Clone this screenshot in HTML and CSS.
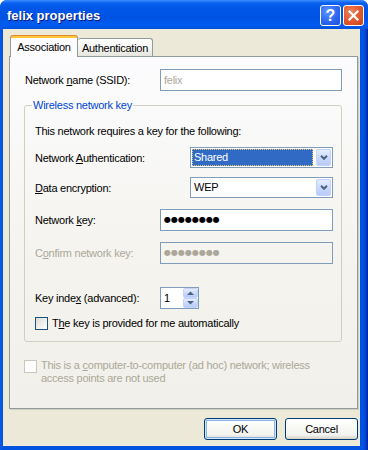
FILE: index.html
```html
<!DOCTYPE html>
<html>
<head>
<meta charset="utf-8">
<link rel="stylesheet" href="styles.css">
</head>
<body>
<div class="window">
  <div class="titlebar">
    <span class="title">felix properties</span>
    <span class="tbtn help">?</span>
    <span class="tbtn close"><svg width="13" height="13" viewBox="0 0 13 13"><path d="M2.5 2.5L10.5 10.5M10.5 2.5L2.5 10.5" stroke="#fff" stroke-width="2.2" stroke-linecap="square"/></svg></span>
  </div>
  <div class="client">
    <div class="tabs">
      <div class="tab active">Association</div>
      <div class="tab">Authentication</div>
    </div>
    <div class="panel">
      <div class="row ssid">
        <span class="lbl">Network <u>n</u>ame (SSID):</span>
        <div class="edit"><span class="ro">felix</span></div>
      </div>
      <fieldset class="group">
        <legend>Wireless network key</legend>
        <div class="intro">This network requires a key for the following:</div>
        <div class="row combo-row">
          <span class="lbl">Network <u>A</u>uthentication:</span>
          <div class="combo"><span class="val sel">Shared</span><span class="drop"><svg width="8" height="5" viewBox="0 0 8 5"><path d="M1 0.8L4 3.8L7 0.8" fill="none" stroke="#4D6185" stroke-width="2"/></svg></span></div>
        </div>
        <div class="row combo-row second">
          <span class="lbl"><u>D</u>ata encryption:</span>
          <div class="combo"><span class="val">WEP</span><span class="drop"><svg width="8" height="5" viewBox="0 0 8 5"><path d="M1 0.8L4 3.8L7 0.8" fill="none" stroke="#4D6185" stroke-width="2"/></svg></span></div>
        </div>
        <div class="row key-row">
          <span class="lbl">Network <u>k</u>ey:</span>
          <div class="edit"><span class="dots">●●●●●●●●</span></div>
        </div>
        <div class="row key-row">
          <span class="lbl dis">C<u>o</u>nfirm network key:</span>
          <div class="edit disabled"><span class="dots">●●●●●●●●</span></div>
        </div>
        <div class="row idx-row">
          <span class="lbl">Key inde<u>x</u> (advanced):</span>
          <div class="spin">
            <span class="spin-val">1</span>
            <span class="spin-btns">
              <span class="sbtn"><svg width="7" height="4" viewBox="0 0 7 4"><path d="M0 4L3.5 0.5L7 4Z" fill="#4D6185"/></svg></span>
              <span class="sbtn"><svg width="7" height="4" viewBox="0 0 7 4"><path d="M0 0L3.5 3.5L7 0Z" fill="#4D6185"/></svg></span>
            </span>
          </div>
        </div>
        <div class="check-row">
          <span class="cbox"></span>
          <span>T<u>h</u>e key is provided for me automatically</span>
        </div>
      </fieldset>
      <div class="adhoc">
        <span class="cbox disabled"></span>
        <span class="dis">This is a <u>c</u>omputer-to-computer (ad hoc) network; wireless<br>access points are not used</span>
      </div>
    </div>
    <div class="buttons">
      <div class="btn default">OK</div>
      <div class="btn">Cancel</div>
    </div>
  </div>
</div>
</body>
</html>
```

FILE: styles.css
```css
html, body {
  margin: 0;
  padding: 0;
}
body {
  width: 368px;
  height: 450px;
  overflow: hidden;
  background: #ffffff;
  font-family: "Liberation Sans", Arial, sans-serif;
  font-size: 11px;
  letter-spacing: -0.25px;
  color: #000;
}
.window {
  width: 368px;
  height: 450px;
  box-sizing: border-box;
  display: flex;
  flex-direction: column;
  background: linear-gradient(to right, #0A5AE6 0, #0053E1 3px, #0053E1 364px, #0040C8 366px, #001C9A 368px);
  border-radius: 7px 7px 0 0;
  overflow: hidden;
}
.titlebar {
  height: 29px;
  flex: none;
  display: flex;
  align-items: flex-start;
  padding: 5px 4px 0 7px;
  box-sizing: border-box;
  background: linear-gradient(to bottom, #3D8EFF 0px, #0A61F0 3px, #0057E8 8px, #0053E2 18px, #005CF2 25px, #0050DA 29px);
}
.title {
  flex: 1;
  color: #fff;
  font-weight: bold;
  font-size: 13px;
  letter-spacing: 0;
  line-height: 21px;
  text-shadow: 1px 1px 0 #0A1883;
}
.tbtn {
  width: 21px;
  height: 21px;
  box-sizing: border-box;
  border: 1px solid #fff;
  border-radius: 3px;
  display: flex;
  align-items: center;
  justify-content: center;
}
.help {
  margin-right: 2px;
  background: radial-gradient(circle at 35% 30%, #5C95FF 0, #2E67F0 55%, #1C4FD6 100%);
  color: #fff;
  font-weight: bold;
  font-size: 16px;
  letter-spacing: 0;
  line-height: 19px;
}
.close {
  background: radial-gradient(circle at 35% 30%, #F0805A 0, #E0572C 55%, #C84318 100%);
}
.client {
  flex: 1;
  margin: 0 8px 4px 3px;
  padding: 6px 2px 0 6px;
  background: #ECE9D8;
  display: flex;
  flex-direction: column;
}
.tabs {
  display: flex;
  align-items: flex-end;
  height: 22px;
  margin-bottom: -1px;
  padding-left: 1px;
  position: relative;
  z-index: 1;
}
.tab {
  box-sizing: border-box;
  border: 1px solid #919B9C;
  border-bottom: none;
  border-radius: 3px 3px 0 0;
}
.tab.active {
  width: 68px;
  height: 22px;
  border-top: 1px solid #E68B2C;
  background: linear-gradient(to bottom, #FFC73C 0, #FFC73C 2px, #FCFCFE 2px);
  padding-top: 2px;
  line-height: 18px;
  text-align: center;
}
.tab:not(.active) {
  width: 75px;
  height: 18px;
  margin-bottom: 1px;
  border-left: none;
  padding-top: 1px;
  line-height: 16px;
  text-align: center;
  background: linear-gradient(to bottom, #FFFFFF, #F3F3EF 60%, #E6E5DE);
}
.panel {
  flex: none;
  width: 349px;
  height: 353px;
  box-sizing: border-box;
  border: 1px solid #919B9C;
  background: linear-gradient(to bottom, #FCFCFE, #F4F3EE 60%, #F1F0EA);
  box-shadow: 1px 1px 0 #D0CEBF;
  padding: 12px 0 0 14px;
}
.row {
  display: grid;
  align-items: center;
}
.lbl {
  white-space: nowrap;
}
.ssid {
  grid-template-columns: 136px 182px;
  height: 22px;
}
.ssid .lbl {
  padding-left: 1px;
}
.edit {
  height: 22px;
  box-sizing: border-box;
  border: 1px solid #7F9DB9;
  background: #fff;
  padding-left: 3px;
  display: flex;
  align-items: center;
}
.edit.disabled {
  background: #F5F4EF;
}
.ro {
  color: #ACA899;
}
.dots {
  font-family: "DejaVu Sans", sans-serif;
  font-size: 8px;
  letter-spacing: 0px;
  line-height: 10px;
  color: #000;
}
.disabled .dots {
  color: #ACA899;
}
.dis {
  color: #ACA899;
}
.group {
  margin: 8px 0 0 0;
  width: 318px;
  box-sizing: border-box;
  border: 1px solid #D0D0BF;
  border-radius: 3px;
  padding: 13px 0 11px 10px;
  min-inline-size: 0;
}
.group legend {
  color: #0046D5;
  padding: 0 1px;
  margin-left: -3px;
  line-height: 13px;
}
.intro {
  line-height: 13px;
}
.combo-row {
  grid-template-columns: 155px 143px;
  height: 21px;
  margin-top: 9px;
}
.combo {
  height: 21px;
  box-sizing: border-box;
  border: 1px solid #7F9DB9;
  background: #fff;
  padding: 1px;
  display: flex;
}
.val {
  flex: 1;
  padding-left: 2px;
  line-height: 17px;
}
.val.sel {
  background: #316AC5;
  color: #fff;
  outline: 1px dotted #E8C46C;
  outline-offset: -1px;
}
.drop {
  width: 15px;
  margin-left: 3px;
  box-sizing: border-box;
  border: 1px solid #C3D3FD;
  border-radius: 2px;
  background: linear-gradient(to bottom, #E6EEFC, #C8D8FC 55%, #B7CCF8);
  display: flex;
  align-items: center;
  justify-content: center;
}
.key-row {
  grid-template-columns: 125px 173px;
  height: 22px;
  margin-top: 11px;
}
.idx-row {
  grid-template-columns: 125px 39px;
  height: 22px;
  margin-top: 23px;
}
.spin {
  height: 22px;
  box-sizing: border-box;
  border: 1px solid #7F9DB9;
  background: #fff;
  display: flex;
}
.spin-val {
  flex: 1;
  padding-left: 3px;
  line-height: 20px;
}
.spin-btns {
  width: 15px;
  display: flex;
  flex-direction: column;
}
.sbtn {
  flex: 1;
  box-sizing: border-box;
  border: 1px solid #C3D3FD;
  border-radius: 2px;
  background: linear-gradient(to bottom, #E6EEFC, #C8D8FC 55%, #B7CCF8);
  display: flex;
  align-items: center;
  justify-content: center;
}
.check-row {
  margin-top: 8px;
  display: flex;
  align-items: center;
  gap: 4px;
  height: 13px;
  line-height: 13px;
}
.cbox {
  flex: none;
  width: 13px;
  height: 13px;
  box-sizing: border-box;
  border: 1px solid #1C5180;
  background: linear-gradient(135deg, #DCDCD7, #FFFFFF);
}
.cbox.disabled {
  border-color: #CAC8BB;
  background: #FFFFFF;
}
.adhoc {
  margin-top: 17px;
  display: flex;
  align-items: flex-start;
  gap: 4px;
  line-height: 13px;
}
.adhoc .cbox {
  margin-top: 1px;
}
.buttons {
  display: flex;
  justify-content: flex-end;
  gap: 8px;
  margin-top: 9px;
}
.btn {
  width: 73px;
  height: 22px;
  box-sizing: border-box;
  border: 1px solid #003C74;
  border-radius: 3px;
  background: linear-gradient(to bottom, #FFFFFF, #F3F3EF 80%, #D6D0C5);
  text-align: center;
  line-height: 20px;
}
.btn.default {
  box-shadow: inset 0 0 0 1px #CEE7FF, inset 0 0 0 2px #8DB2E3;
}
```
